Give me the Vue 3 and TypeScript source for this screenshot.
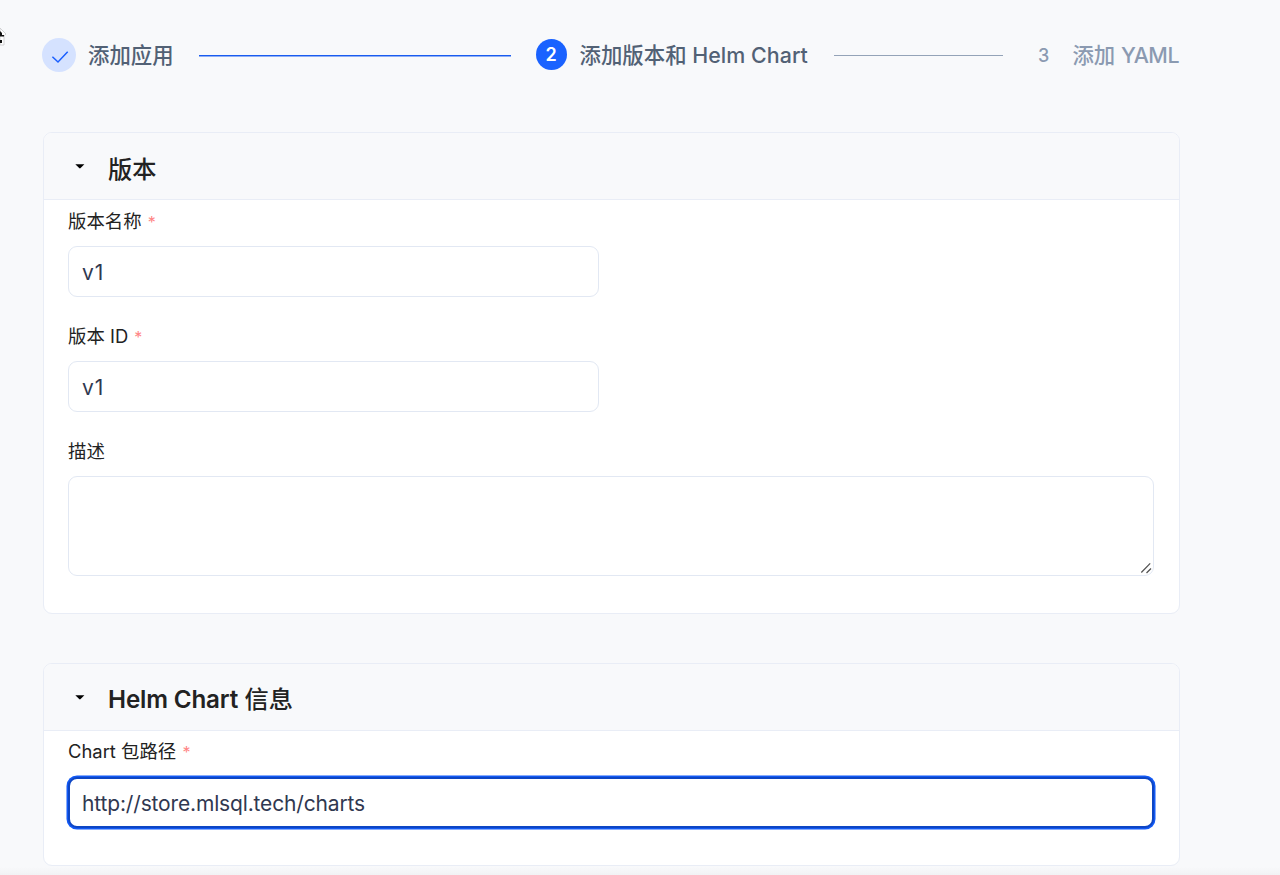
<script setup lang="ts">
import { ref } from 'vue'

const versionName = ref('v1')
const versionId = ref('v1')
const description = ref('')
const chartPath = ref('http://store.mlsql.tech/charts')
</script>

<template>
  <main class="page">
    <svg class="cursor" viewBox="0 0 7 20" aria-hidden="true">
      <path d="M0 1L6 7L4 9V18H0Z" fill="#fff" stroke="#c8c8ca" stroke-width=".8" />
      <path d="M0 4L2 6V8H0ZM0 8H4V9.5H0ZM0 13H2V16H0Z" fill="#111" />
    </svg>
    <nav class="steps">
      <div class="step">
        <span class="badge done">
          <svg viewBox="0 0 18 14" aria-hidden="true"><path d="M1.4 6.7L7 12L16.7 1.8" /></svg>
        </span>
        <span class="step-label">添加应用</span>
      </div>
      <span class="line active-line"></span>
      <div class="step">
        <span class="badge current">2</span>
        <span class="step-label">添加版本和 <b>Helm Chart</b></span>
      </div>
      <span class="line idle-line"></span>
      <div class="step pending">
        <span class="number">3</span>
        <span class="step-label">添加 <b class="yaml">YAML</b></span>
      </div>
    </nav>

    <section class="card version">
      <header>
        <svg class="caret" viewBox="0 0 10 5" aria-hidden="true"><path d="M0.3 .3H9.4L5.6 4.1Q4.9 4.7 4.2 4.1Z" /></svg>
        <h2>版本</h2>
      </header>
      <div class="body">
        <div class="field">
          <label for="name">版本名称 <i>*</i></label>
          <input id="name" v-model="versionName" class="half" />
        </div>
        <div class="field">
          <label for="vid">版本 ID <i>*</i></label>
          <input id="vid" v-model="versionId" class="half" />
        </div>
        <div class="field">
          <label for="desc">描述</label>
          <div class="area">
            <textarea id="desc" v-model="description"></textarea>
            <svg viewBox="0 0 12 12" aria-hidden="true"><path d="M1.3 10.5L10.2 1.4M6.5 11L11 6.5" /></svg>
          </div>
        </div>
      </div>
    </section>

    <section class="card chart">
      <header>
        <svg class="caret" viewBox="0 0 10 5" aria-hidden="true"><path d="M0.3 .3H9.4L5.6 4.1Q4.9 4.7 4.2 4.1Z" /></svg>
        <h2><b>Helm Chart</b> 信息</h2>
      </header>
      <div class="body">
        <div class="field">
          <label for="path">Chart 包路径 <i>*</i></label>
          <input id="path" v-model="chartPath" class="focused" spellcheck="false" />
        </div>
      </div>
    </section>
    <div class="bottom-shade"></div>
  </main>
</template>

<style>
body {
  background: #f8f9fb;
}
</style>

<style scoped>
* {
  box-sizing: border-box;
}
.page {
  position: relative;
  height: 875px;
  overflow: hidden;
  padding: 32px 101px 0 42px;
  background: #f8f9fb;
  color: #222;
  font-family: Inter, "Noto Sans CJK SC", sans-serif;
}
.cursor {
  position: absolute;
  left: 0;
  top: 27px;
  width: 7px;
  height: 20px;
}
.steps {
  display: flex;
  align-items: center;
  height: 45px;
  color: #526175;
}
.step {
  display: flex;
  align-items: center;
  flex: none;
}
.step-label {
  font-size: 21.4px;
  font-weight: 500;
  line-height: 30px;
  white-space: nowrap;
}
.step-label b {
  font-weight: 550;
  letter-spacing: 0.05px;
}
.step-label .yaml {
  letter-spacing: -0.5px;
}
.badge {
  display: flex;
  align-items: center;
  justify-content: center;
  border-radius: 50%;
}
.done {
  width: 34px;
  height: 34px;
  margin-right: 12px;
  background: #d5e2ff;
}
.done svg {
  width: 18px;
  height: 14px;
  margin: 4px 0 0 1px;
}
.done path {
  fill: none;
  stroke: #1a5fff;
  stroke-width: 1.5;
}
.current {
  width: 31px;
  height: 31px;
  margin-right: 13px;
  background: #1a62ff;
  color: #fff;
  font-size: 18px;
  font-weight: 600;
}
.line {
  flex: none;
  margin-top: 1px;
}
.active-line {
  width: 312px;
  height: 2px;
  margin-left: 25px;
  margin-right: 25px;
  margin-top: 2px;
  background: linear-gradient(#1a5cf0 50%, #8eaef5 50%);
}
.idle-line {
  width: 169px;
  height: 1px;
  margin-left: auto;
  margin-right: 35px;
  background: #94a3b8;
}
.pending {
  width: 141px;
  justify-content: space-between;
  color: #8b9ab1;
}
.number {
  margin-top: 1px;
  font-size: 18px;
  font-weight: 500;
}
.card {
  width: 1137px;
  border: 1px solid #e9edf6;
  border-radius: 9px;
  overflow: hidden;
  background: #fff;
}
.version {
  height: 482px;
  margin-left: 1px;
  margin-top: 55px;
}
.chart {
  height: 203px;
  margin-left: 1px;
  margin-top: 49px;
}
.card header {
  display: flex;
  align-items: center;
  height: 67px;
  padding-left: 31px;
  border-bottom: 1px solid #e9edf6;
  background: #f8f9fb;
}
.caret {
  width: 10px;
  height: 5px;
  margin-right: 23px;
}
.version .caret {
  margin-top: 1px;
}
h2 {
  margin: 6px 0 0;
  font-size: 24.2px;
  font-weight: 500;
  line-height: 34px;
}
.version h2 {
  margin-top: 8px;
}
h2 b {
  font-weight: 600;
  letter-spacing: -0.15px;
}
.body {
  padding: 8px 25px 0 24px;
}
.chart .body {
  padding-top: 7px;
}
.field {
  height: 115.2px;
}
label {
  display: block;
  height: 26px;
  margin-bottom: 12px;
  font-size: 18.4px;
  line-height: 26px;
}
label i {
  margin-left: 1px;
  color: #ff8585;
  font-size: 16px;
  font-style: normal;
}
input,
textarea {
  display: block;
  width: 100%;
  border: 1.5px solid #e2e8f3;
  border-radius: 9px;
  outline: 0;
  background: #fff;
  color: #303850;
  font: 400 21px/30px Inter, "Noto Sans CJK SC", sans-serif;
}
input {
  height: 51px;
  padding: 1px 13px 0;
}
.half {
  width: 531px;
  letter-spacing: 1px;
}
.focused {
  border: 2px solid #0e46c4;
  padding: 2px 12px 0;
  letter-spacing: -0.15px;
  box-shadow: 0 0 0 1.5px #1259f5;
}
.chart label {
  margin-bottom: 13px;
}
.area {
  position: relative;
}
textarea {
  height: 100px;
  resize: none;
}
.area svg {
  position: absolute;
  right: 2px;
  bottom: 2px;
  width: 12px;
  height: 12px;
}
.area path {
  fill: none;
  stroke: #555;
  stroke-width: 1.3;
}
.bottom-shade {
  position: absolute;
  inset: auto 0 0;
  height: 8px;
  background: linear-gradient(#f3f4f600, #f1f2f4);
}
</style>
